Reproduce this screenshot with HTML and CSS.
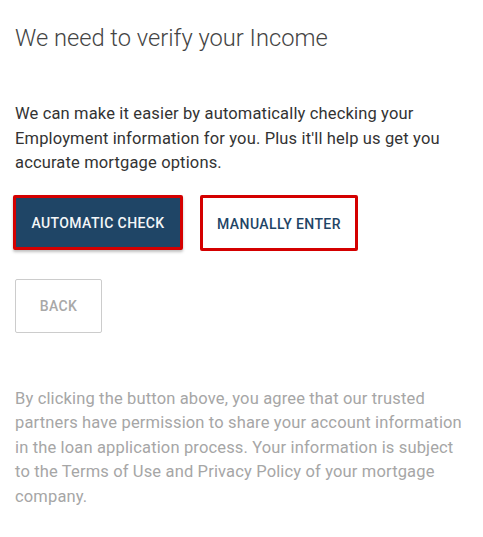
FILE: index.html
```html
<!DOCTYPE html>
<html>
<head>
<meta charset="utf-8">
<link rel="stylesheet" href="styles.css">
</head>
<body>
<div class="page">
  <h1 class="title">We need to verify your Income</h1>
  <p class="intro">We can make it easier by automatically checking your Employment information for you. Plus it'll help us get you accurate mortgage options.</p>
  <div class="actions">
    <button class="btn btn-primary">AUTOMATIC CHECK</button>
    <button class="btn btn-outline">MANUALLY ENTER</button>
  </div>
  <div class="back-row">
    <button class="btn btn-back">BACK</button>
  </div>
  <p class="disclaimer">By clicking the button above, you agree that our trusted partners have permission to share your account information in the loan application process. Your information is subject to the Terms of Use and Privacy Policy of your mortgage company.</p>
</div>
</body>
</html>
```
FILE: styles.css
```css
html, body {
  margin: 0;
  padding: 0;
  background: #ffffff;
}
body {
  font-family: Roboto, "Liberation Sans", sans-serif;
}
.page {
  width: 450px;
  padding: 18px 15px 0 15px;
}
.title {
  margin: 0;
  font-size: 23.7px;
  font-weight: 300;
  line-height: 40px;
  color: #444444;
}
.intro {
  margin: 44px 0 0 0;
  font-size: 16.5px;
  letter-spacing: 0.15px;
  line-height: 24.5px;
  color: #333333;
}
.actions {
  display: flex;
  gap: 17px;
  margin-top: 19px;
  margin-left: -2px;
}
.btn {
  font-family: Roboto, "Liberation Sans", sans-serif;
  font-size: 14px;
  font-weight: 500;
  letter-spacing: 0.4px;
  border-radius: 2px;
  cursor: pointer;
}
.btn-primary {
  width: 170px;
  height: 55px;
  padding-top: 3px;
  background: #1f4566;
  color: #f4f6f8;
  border: 3px solid #d40000;
  box-shadow: 0 2px 3px rgba(0,0,0,0.25);
}
.btn-outline {
  width: 158px;
  height: 56px;
  padding-top: 3px;
  background: #ffffff;
  color: #1f4566;
  border: 3px solid #d40000;
}
.back-row {
  margin-top: 28px;
}
.btn-back {
  width: 87px;
  height: 54px;
  padding-top: 2px;
  background: #ffffff;
  color: #a8a8a8;
  border: 1px solid #cccccc;
}
.disclaimer {
  margin: 54px 0 0 0;
  font-size: 16.5px;
  letter-spacing: 0.15px;
  line-height: 24.5px;
  color: #a6a6a6;
}
```
